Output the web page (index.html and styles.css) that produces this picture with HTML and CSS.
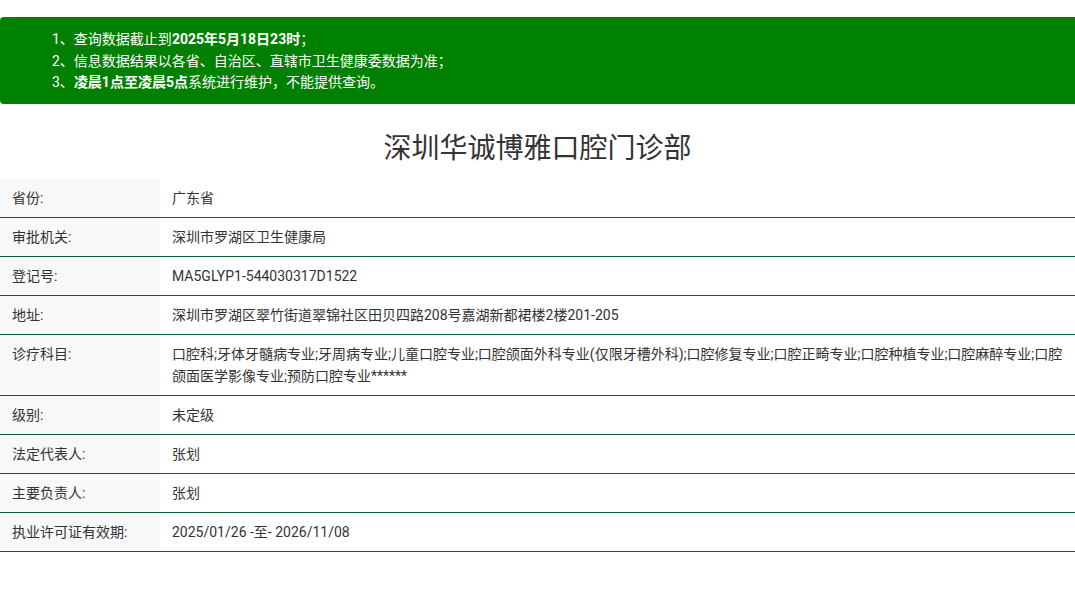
FILE: index.html
```html
<!DOCTYPE html>
<html lang="zh-CN">
<head>
<meta charset="utf-8">
<title>深圳华诚博雅口腔门诊部</title>
<link rel="stylesheet" href="styles.css">
</head>
<body>
<div class="notice">
  <p>1、查询数据截止到<b>2025年5月18日23时</b>；</p>
  <p>2、信息数据结果以各省、自治区、直辖市卫生健康委数据为准；</p>
  <p>3、<b>凌晨1点至凌晨5点</b>系统进行维护，不能提供查询。</p>
</div>
<h1 class="title">深圳华诚博雅口腔门诊部</h1>
<div class="info">
  <div class="row"><div class="label">省份:</div><div class="value">广东省</div></div>
  <div class="row"><div class="label">审批机关:</div><div class="value">深圳市罗湖区卫生健康局</div></div>
  <div class="row"><div class="label">登记号:</div><div class="value">MA5GLYP1-544030317D1522</div></div>
  <div class="row"><div class="label">地址:</div><div class="value">深圳市罗湖区翠竹街道翠锦社区田贝四路208号嘉湖新都裙楼2楼201-205</div></div>
  <div class="row"><div class="label">诊疗科目:</div><div class="value">口腔科;牙体牙髓病专业;牙周病专业;儿童口腔专业;口腔颌面外科专业(仅限牙槽外科);口腔修复专业;口腔正畸专业;口腔种植专业;口腔麻醉专业;口腔颌面医学影像专业;预防口腔专业******</div></div>
  <div class="row"><div class="label">级别:</div><div class="value">未定级</div></div>
  <div class="row"><div class="label">法定代表人:</div><div class="value">张划</div></div>
  <div class="row"><div class="label">主要负责人:</div><div class="value">张划</div></div>
  <div class="row"><div class="label">执业许可证有效期:</div><div class="value">2025/01/26 -至- 2026/11/08</div></div>
</div>
</body>
</html>
```

FILE: styles.css
```css
html, body {
  margin: 0;
  padding: 0;
  background: #fff;
}
body {
  font-family: Roboto, "Noto Sans CJK SC", sans-serif;
  color: #333;
  font-size: 14px;
}
.notice {
  margin-top: 17px;
  background: #008000;
  color: #fff;
  border-radius: 4px 0 0 4px;
  padding: 12px 0 10px 52px;
  height: 65px;
  font-size: 14px;
}
.notice p {
  margin: 0;
  line-height: 21.5px;
  height: 21.5px;
}
.notice b {
  font-weight: 700;
}
.title {
  margin: 25px 0 10px;
  font-size: 28px;
  line-height: 40px;
  font-weight: 400;
  text-align: center;
  color: #333;
}
.info {
  display: flex;
  flex-direction: column;
}
.row {
  display: flex;
  border-bottom: 1px solid #0b5e2f;
}
.label {
  flex: 0 0 160px;
  box-sizing: border-box;
  background: #f8f8f8;
  padding: 8px 12px;
  line-height: 22px;
}
.value {
  flex: 1;
  padding: 8px 12px;
  line-height: 22px;
}
```
